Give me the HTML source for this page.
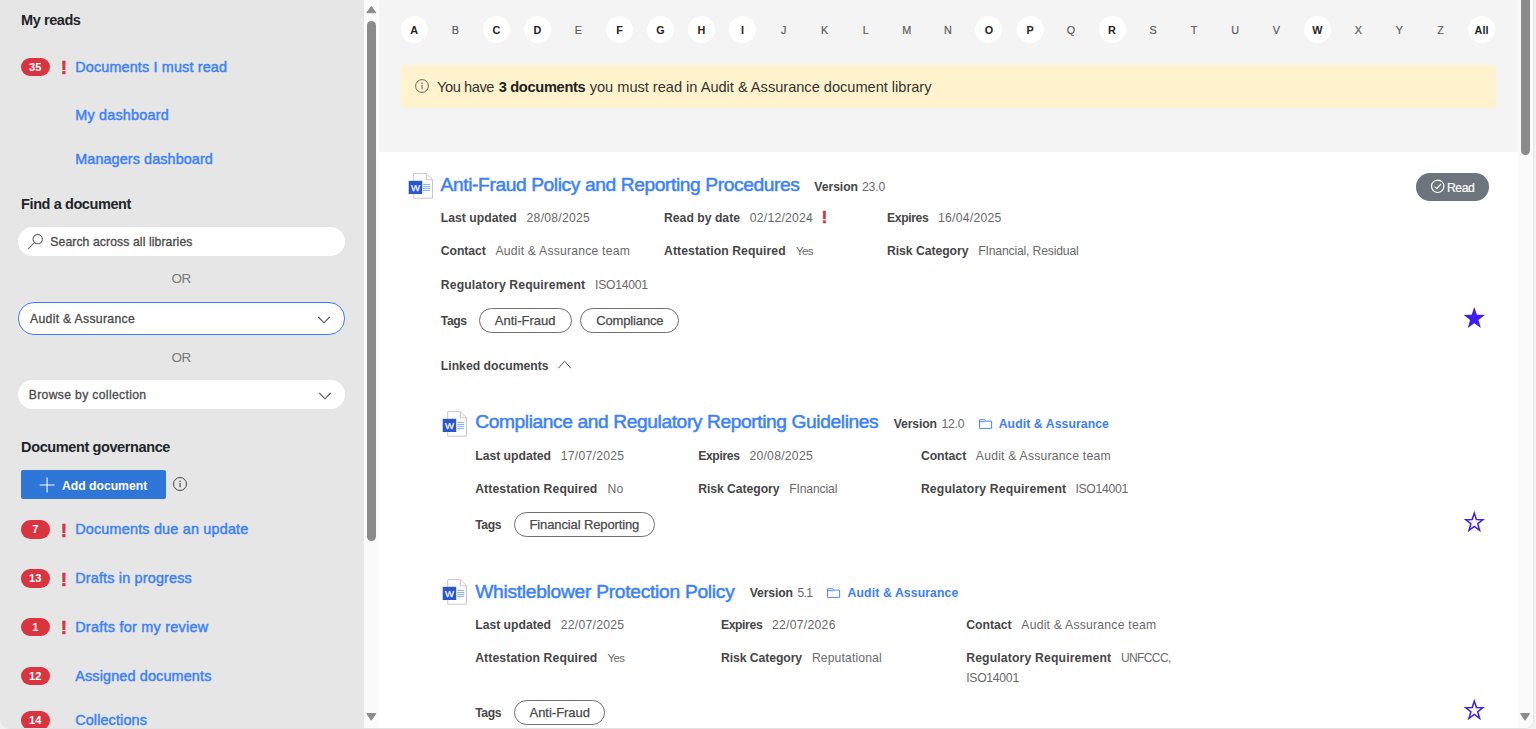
<!DOCTYPE html>
<html lang="en">
<head>
<meta charset="utf-8">
<title>Document library</title>
<style>
*{box-sizing:border-box;margin:0;padding:0}
html,body{width:1536px;height:729px;overflow:hidden;background:#f2f2f2;font-family:"Liberation Sans",sans-serif;color:#212529}
#app{position:absolute;left:0;top:0;width:1534px;height:729px;background:#fff;overflow:hidden;border-right:1px solid #e6e6e6;border-bottom:1px solid #e2e2e2;border-bottom-right-radius:9px;border-bottom-left-radius:9px}
.a,.t{position:absolute;white-space:nowrap}
.t{line-height:20px;height:20px}
svg{position:absolute;overflow:visible}
#side{left:0;top:0;width:364px;height:729px;background:#e6e6e6}
.sb{top:0;width:15px;height:729px;background:#fbfbfb}
.thumb{background:#8b8b8b;border-radius:5px;width:9px}
.badge{left:20.8px;width:29px;height:18.5px;border-radius:9.25px;background:#d9343f;color:#fff;font-size:11.2px;font-weight:bold;text-align:center;line-height:19.3px}
.ex{left:60px;width:8px;color:#d9343f;font-weight:bold;font-size:17.6px;line-height:20px;height:20px;text-align:center;-webkit-text-stroke:0.7px #d9343f}
.pill{left:17.5px;width:327.5px;border-radius:16px;background:#fff}
#top{left:379px;top:0;width:1139px;height:151.5px;background:#f4f4f4}
.al{top:15.6px;width:27px;height:27px;border-radius:50%;text-align:center;line-height:29.6px;font-size:10.8px;color:#5c5c5c;-webkit-text-stroke:0.2px #5c5c5c}
.al.on{background:#fff;color:#212529;font-weight:bold;-webkit-text-stroke:0}
#banner{left:401px;top:65.2px;width:1094.5px;height:43px;border-radius:4px;background:#fff3cd}
.tag{border:1.2px solid #707070;border-radius:13px}
</style>
</head>
<body>
<div id="app">
<div class="a" id="side"></div>
<div class="a sb" style="left:364px"></div>
<div class="a thumb" style="left:367px;top:20.5px;height:520.5px;width:8.8px"></div>
<div class="a" id="top"></div>
<div class="a sb" style="left:1517.6px;width:15.6px"></div>
<div class="a thumb" style="left:1520.9px;top:-10px;height:164.8px;width:8.8px"></div>
<svg style="left:0;top:0" width="1" height="1"><path d="M366.8 12.7 L371.3 6.4 L375.8 12.7 Z" fill="#8b8b8b" stroke="#8b8b8b" stroke-width="1" stroke-linejoin="round"/></svg>
<svg style="left:0;top:0" width="1" height="1"><path d="M366.8 713.6 L371.3 720.2 L375.8 713.6 Z" fill="#8b8b8b" stroke="#8b8b8b" stroke-width="1" stroke-linejoin="round"/></svg>
<svg style="left:0;top:0" width="1" height="1"><path d="M1520.6 713.6 L1525.1 720.2 L1529.6 713.6 Z" fill="#8b8b8b" stroke="#8b8b8b" stroke-width="1" stroke-linejoin="round"/></svg>
<div class="a badge" style="top:57.75px">35</div>
<div class="a ex" style="top:58.3px">!</div>
<div class="a badge" style="top:520.25px">7</div>
<div class="a ex" style="top:520.8px">!</div>
<div class="a badge" style="top:569.25px">13</div>
<div class="a ex" style="top:569.8px">!</div>
<div class="a badge" style="top:617.75px">1</div>
<div class="a ex" style="top:618.3px">!</div>
<div class="a badge" style="top:666.75px">12</div>
<div class="a badge" style="top:711.25px">14</div>
<div class="a pill" style="top:227px;height:29px"></div>
<svg style="left:27px;top:232px" width="18" height="18" fill="none" stroke="#666" stroke-width="1.1"><circle cx="10.7" cy="7.1" r="4.7"/><path d="M7.4 10.6 L1.4 16.6" stroke-linecap="round"/></svg>
<div class="a pill" style="top:302.3px;height:32.4px;border:1.9px solid #3b80f4"></div>
<div class="a pill" style="top:380.4px;height:28.8px"></div>
<svg style="left:317.1px;top:314.5px" width="14" height="10" fill="none" stroke="#555" stroke-width="1.1"><path d="M1.3 2 L7 7.8 L12.7 2"/></svg>
<svg style="left:318.3px;top:391px" width="14" height="10" fill="none" stroke="#555" stroke-width="1.1"><path d="M1.3 2 L7 7.8 L12.7 2"/></svg>
<div class="a" style="left:20.8px;top:470.1px;width:145.2px;height:29px;border-radius:2px;background:#2f76d9"></div>
<svg style="left:39px;top:477px" width="16" height="16" stroke="#fff" stroke-width="1.1"><path d="M8.1 0.6 V15.4 M0.7 8 H15.5"/></svg>
<svg style="left:171.6px;top:476.3px" width="16" height="16"><circle cx="8" cy="8" r="6.5" fill="none" stroke="#444" stroke-width="1"/><rect x="7.5" y="7" width="1.1" height="4.2" fill="#444"/><rect x="7.4" y="4.6" width="1.3" height="1.3" fill="#444"/></svg>
<div class="a al on" style="left:400.7px">A</div>
<div class="a al" style="left:441.8px">B</div>
<div class="a al on" style="left:482.8px">C</div>
<div class="a al on" style="left:523.9px">D</div>
<div class="a al" style="left:564.9px">E</div>
<div class="a al on" style="left:606.0px">F</div>
<div class="a al on" style="left:647.0px">G</div>
<div class="a al on" style="left:688.0px">H</div>
<div class="a al on" style="left:729.1px">I</div>
<div class="a al" style="left:770.1px">J</div>
<div class="a al" style="left:811.2px">K</div>
<div class="a al" style="left:852.2px">L</div>
<div class="a al" style="left:893.3px">M</div>
<div class="a al" style="left:934.3px">N</div>
<div class="a al on" style="left:975.4px">O</div>
<div class="a al on" style="left:1016.5px">P</div>
<div class="a al" style="left:1057.5px">Q</div>
<div class="a al on" style="left:1098.5px">R</div>
<div class="a al" style="left:1139.6px">S</div>
<div class="a al" style="left:1180.6px">T</div>
<div class="a al" style="left:1221.7px">U</div>
<div class="a al" style="left:1262.8px">V</div>
<div class="a al on" style="left:1303.8px">W</div>
<div class="a al" style="left:1344.8px">X</div>
<div class="a al" style="left:1385.9px">Y</div>
<div class="a al" style="left:1427.0px">Z</div>
<div class="a al on" style="left:1468.0px">All</div>
<div class="a" id="banner"></div>
<svg style="left:414px;top:78.3px" width="16" height="16"><circle cx="8" cy="8" r="6.4" fill="none" stroke="#666" stroke-width="1"/><rect x="7.5" y="7" width="1.1" height="4.2" fill="#666"/><rect x="7.4" y="4.6" width="1.3" height="1.3" fill="#666"/></svg>
<svg style="left:0px;top:0px" width="1" height="1"><path d="M413.7 173.6 H426.3 L432.5 179.8 V198.2 H413.7 Z" fill="#fff" stroke="#c9c9c9" stroke-width="1"/><path d="M426.3 173.6 V179.8 H432.5" fill="none" stroke="#c9c9c9" stroke-width="1"/><rect x="408.7" y="180.8" width="13.5" height="13.2" fill="#2a56c6"/><path d="M423.2 184.5 H430.2 M423.2 186.5 H430.2 M423.2 188.5 H430.2 M423.2 190.5 H430.2" stroke="#7aaaf0" stroke-width="0.9"/><text x="415.45" y="190.9" text-anchor="middle" font-family="Liberation Sans, sans-serif" font-size="9.6" fill="#fff" stroke="#fff" stroke-width="0.25">W</text></svg>
<svg style="left:33.5px;top:237.5px" width="1" height="1"><path d="M413.7 173.6 H426.3 L432.5 179.8 V198.2 H413.7 Z" fill="#fff" stroke="#c9c9c9" stroke-width="1"/><path d="M426.3 173.6 V179.8 H432.5" fill="none" stroke="#c9c9c9" stroke-width="1"/><rect x="408.7" y="180.8" width="13.5" height="13.2" fill="#2a56c6"/><path d="M423.2 184.5 H430.2 M423.2 186.5 H430.2 M423.2 188.5 H430.2 M423.2 190.5 H430.2" stroke="#7aaaf0" stroke-width="0.9"/><text x="415.45" y="190.9" text-anchor="middle" font-family="Liberation Sans, sans-serif" font-size="9.6" fill="#fff" stroke="#fff" stroke-width="0.25">W</text></svg>
<svg style="left:33.5px;top:406.0px" width="1" height="1"><path d="M413.7 173.6 H426.3 L432.5 179.8 V198.2 H413.7 Z" fill="#fff" stroke="#c9c9c9" stroke-width="1"/><path d="M426.3 173.6 V179.8 H432.5" fill="none" stroke="#c9c9c9" stroke-width="1"/><rect x="408.7" y="180.8" width="13.5" height="13.2" fill="#2a56c6"/><path d="M423.2 184.5 H430.2 M423.2 186.5 H430.2 M423.2 188.5 H430.2 M423.2 190.5 H430.2" stroke="#7aaaf0" stroke-width="0.9"/><text x="415.45" y="190.9" text-anchor="middle" font-family="Liberation Sans, sans-serif" font-size="9.6" fill="#fff" stroke="#fff" stroke-width="0.25">W</text></svg>
<div class="a" style="left:1416.3px;top:173.2px;width:72.5px;height:27.5px;border-radius:14px;background:#6c757d"></div>
<svg style="left:1430px;top:179px" width="16" height="16" fill="none" stroke="#fff" stroke-width="1.2"><circle cx="7.7" cy="7.3" r="6.2"/><path d="M4.6 7.6 L6.8 9.7 L10.9 5.2"/></svg>
<div class="a ex" style="left:820.5px;top:208px;font-size:16px">!</div>
<div class="a tag" style="left:479px;top:308.2px;width:92.6px;height:24.8px"></div>
<div class="a tag" style="left:580.2px;top:308.2px;width:98.5px;height:24.8px"></div>
<div class="a tag" style="left:513.8px;top:512.0px;width:141.0px;height:24.6px"></div>
<div class="a tag" style="left:513.8px;top:700.2px;width:91.4px;height:24.4px"></div>
<svg style="left:557px;top:358px" width="16" height="12" fill="none" stroke="#555" stroke-width="1"><path d="M1.4 10.2 L7.6 3.2 L13.8 10.2"/></svg>
<svg style="left:978.8px;top:418.8px" width="14" height="11" fill="none" stroke="#4a88f5" stroke-width="1"><path d="M0.6 9.4 V0.7 H5.6 L6.6 2.1 H12.6 V9.4 Z M0.6 2.7 H5.6 L6.6 2.1"/></svg>
<svg style="left:826.8px;top:587.6px" width="14" height="11" fill="none" stroke="#4a88f5" stroke-width="1"><path d="M0.6 9.4 V0.7 H5.6 L6.6 2.1 H12.6 V9.4 Z M0.6 2.7 H5.6 L6.6 2.1"/></svg>
<svg style="left:0;top:0" width="1" height="1"><polygon points="1474.30,307.00 1476.90,314.85 1484.81,315.01 1478.50,320.03 1480.80,327.99 1474.30,323.24 1467.80,327.99 1470.10,320.03 1463.79,315.01 1471.70,314.85" fill="#3d1cf5"/></svg>
<svg style="left:0;top:0" width="1" height="1"><polygon points="1474.30,513.15 1476.42,519.54 1482.86,519.68 1477.72,523.77 1479.59,530.25 1474.30,526.38 1469.01,530.25 1470.88,523.77 1465.74,519.68 1472.18,519.54" fill="none" stroke="#3d1cf5" stroke-width="1.5" stroke-linejoin="miter"/></svg>
<svg style="left:0;top:0" width="1" height="1"><polygon points="1474.30,701.15 1476.42,707.54 1482.86,707.68 1477.72,711.77 1479.59,718.25 1474.30,714.38 1469.01,718.25 1470.88,711.77 1465.74,707.68 1472.18,707.54" fill="none" stroke="#3d1cf5" stroke-width="1.5" stroke-linejoin="miter"/></svg>
<div class="t" style="left:21.1px;top:10.4px;font-size:14.5px;color:#212529;letter-spacing:-0.434px;font-weight:bold">My reads</div>
<div class="t" style="left:21.1px;top:194.0px;font-size:14.5px;color:#212529;letter-spacing:-0.407px;font-weight:bold">Find a document</div>
<div class="t" style="left:21.1px;top:436.9px;font-size:14.5px;color:#212529;letter-spacing:-0.391px;font-weight:bold">Document governance</div>
<div class="t" style="left:75.2px;top:56.5px;font-size:14.4px;color:#3b82f6;letter-spacing:0.154px;-webkit-text-stroke:0.45px #3b82f6">Documents I must read</div>
<div class="t" style="left:75.2px;top:105.2px;font-size:14.4px;color:#3b82f6;letter-spacing:0.216px;-webkit-text-stroke:0.45px #3b82f6">My dashboard</div>
<div class="t" style="left:75.2px;top:149.2px;font-size:14.4px;color:#3b82f6;letter-spacing:0.099px;-webkit-text-stroke:0.45px #3b82f6">Managers dashboard</div>
<div class="t" style="left:75.2px;top:518.7px;font-size:14.4px;color:#3b82f6;letter-spacing:0.195px;-webkit-text-stroke:0.45px #3b82f6">Documents due an update</div>
<div class="t" style="left:75.2px;top:568.0px;font-size:14.4px;color:#3b82f6;letter-spacing:0.179px;-webkit-text-stroke:0.45px #3b82f6">Drafts in progress</div>
<div class="t" style="left:75.2px;top:616.7px;font-size:14.4px;color:#3b82f6;letter-spacing:0.268px;-webkit-text-stroke:0.45px #3b82f6">Drafts for my review</div>
<div class="t" style="left:75.2px;top:665.7px;font-size:14.4px;color:#3b82f6;letter-spacing:0.150px;-webkit-text-stroke:0.45px #3b82f6">Assigned documents</div>
<div class="t" style="left:75.2px;top:710.0px;font-size:14.4px;color:#3b82f6;letter-spacing:0.128px;-webkit-text-stroke:0.45px #3b82f6">Collections</div>
<div class="t" style="left:50.3px;top:232.4px;font-size:12.2px;color:#4a4a4a;letter-spacing:0.098px;-webkit-text-stroke:0.3px #4a4a4a">Search across all libraries</div>
<div class="t" style="left:30.0px;top:309.0px;font-size:12.2px;color:#4a4a4a;letter-spacing:0.318px;-webkit-text-stroke:0.3px #4a4a4a">Audit &amp; Assurance</div>
<div class="t" style="left:28.7px;top:384.9px;font-size:12.2px;color:#4a4a4a;letter-spacing:0.335px;-webkit-text-stroke:0.3px #4a4a4a">Browse by collection</div>
<div class="t" style="left:171.5px;top:268.8px;font-size:13.47px;color:#777;letter-spacing:-0.600px">OR</div>
<div class="t" style="left:171.5px;top:347.5px;font-size:13.47px;color:#777;letter-spacing:-0.600px">OR</div>
<div class="t" style="left:62.0px;top:475.9px;font-size:12.2px;color:#fff;letter-spacing:-0.009px;font-weight:bold">Add document</div>
<div class="t" style="left:437.0px;top:77.0px;font-size:14.6px;color:#333;letter-spacing:-0.416px">You have</div>
<div class="t" style="left:498.7px;top:77.0px;font-size:14.6px;color:#222;letter-spacing:-0.301px;font-weight:bold">3 documents</div>
<div class="t" style="left:589.7px;top:77.0px;font-size:14.6px;color:#333;letter-spacing:-0.010px">you must read in Audit &amp; Assurance document library</div>
<div class="t" style="left:440.6px;top:175.3px;font-size:19.2px;color:#3b82f6;letter-spacing:-0.393px;-webkit-text-stroke:0.5px #3b82f6">Anti-Fraud Policy and Reporting Procedures</div>
<div class="t" style="left:814.3px;top:177.0px;font-size:12.2px;color:#464646;letter-spacing:-0.047px;font-weight:bold">Version</div>
<div class="t" style="left:862.0px;top:177.0px;font-size:12.2px;color:#6a6a6a;letter-spacing:-0.184px">23.0</div>
<div class="t" style="left:1447.0px;top:177.7px;font-size:12.2px;color:#fff;letter-spacing:-0.460px;-webkit-text-stroke:0.2px #fff">Read</div>
<div class="t" style="left:440.8px;top:208.0px;font-size:12.2px;color:#464646;letter-spacing:0.013px;font-weight:bold">Last updated</div>
<div class="t" style="left:526.6px;top:208.0px;font-size:12.2px;color:#6a6a6a;letter-spacing:0.240px">28/08/2025</div>
<div class="t" style="left:664.0px;top:208.0px;font-size:12.2px;color:#464646;letter-spacing:0.012px;font-weight:bold">Read by date</div>
<div class="t" style="left:749.8px;top:208.0px;font-size:12.2px;color:#6a6a6a;letter-spacing:0.220px">02/12/2024</div>
<div class="t" style="left:887.0px;top:208.0px;font-size:12.2px;color:#464646;letter-spacing:-0.378px;font-weight:bold">Expires</div>
<div class="t" style="left:938.0px;top:208.0px;font-size:12.2px;color:#6a6a6a;letter-spacing:0.260px">16/04/2025</div>
<div class="t" style="left:440.8px;top:241.0px;font-size:12.2px;color:#464646;letter-spacing:-0.054px;font-weight:bold">Contact</div>
<div class="t" style="left:495.5px;top:241.0px;font-size:12.2px;color:#6a6a6a;letter-spacing:0.201px">Audit &amp; Assurance team</div>
<div class="t" style="left:664.0px;top:241.0px;font-size:12.2px;color:#464646;letter-spacing:0.097px;font-weight:bold">Attestation Required</div>
<div class="t" style="left:796.0px;top:241.0px;font-size:11.53px;color:#6a6a6a;letter-spacing:-0.600px">Yes</div>
<div class="t" style="left:887.0px;top:241.0px;font-size:12.2px;color:#464646;letter-spacing:-0.044px;font-weight:bold">Risk Category</div>
<div class="t" style="left:978.2px;top:241.0px;font-size:12.2px;color:#6a6a6a;letter-spacing:-0.171px">FInancial, Residual</div>
<div class="t" style="left:440.8px;top:275.0px;font-size:12.2px;color:#464646;letter-spacing:0.134px;font-weight:bold">Regulatory Requirement</div>
<div class="t" style="left:595.0px;top:275.0px;font-size:12.2px;color:#6a6a6a;letter-spacing:-0.261px">ISO14001</div>
<div class="t" style="left:440.8px;top:311.2px;font-size:12.2px;color:#464646;letter-spacing:-0.437px;font-weight:bold">Tags</div>
<div class="t" style="left:440.8px;top:356.0px;font-size:12.2px;color:#464646;letter-spacing:0.008px;font-weight:bold">Linked documents</div>
<div class="t" style="left:475.2px;top:412.3px;font-size:19.2px;color:#3b82f6;letter-spacing:-0.396px;-webkit-text-stroke:0.5px #3b82f6">Compliance and Regulatory Reporting Guidelines</div>
<div class="t" style="left:893.7px;top:414.0px;font-size:12.2px;color:#464646;letter-spacing:-0.119px;font-weight:bold">Version</div>
<div class="t" style="left:941.6px;top:414.0px;font-size:12.2px;color:#6a6a6a;letter-spacing:-0.259px">12.0</div>
<div class="t" style="left:998.7px;top:414.0px;font-size:12.2px;color:#3b80f2;letter-spacing:0.100px;font-weight:bold">Audit &amp; Assurance</div>
<div class="t" style="left:475.2px;top:445.8px;font-size:12.2px;color:#464646;letter-spacing:-0.004px;font-weight:bold">Last updated</div>
<div class="t" style="left:560.7px;top:445.8px;font-size:12.2px;color:#6a6a6a;letter-spacing:0.270px">17/07/2025</div>
<div class="t" style="left:698.2px;top:445.8px;font-size:12.2px;color:#464646;letter-spacing:-0.378px;font-weight:bold">Expires</div>
<div class="t" style="left:749.4px;top:445.8px;font-size:12.2px;color:#6a6a6a;letter-spacing:0.260px">20/08/2025</div>
<div class="t" style="left:920.9px;top:445.8px;font-size:12.2px;color:#464646;letter-spacing:-0.011px;font-weight:bold">Contact</div>
<div class="t" style="left:975.8px;top:445.8px;font-size:12.2px;color:#6a6a6a;letter-spacing:0.224px">Audit &amp; Assurance team</div>
<div class="t" style="left:475.2px;top:478.8px;font-size:12.2px;color:#464646;letter-spacing:0.117px;font-weight:bold">Attestation Required</div>
<div class="t" style="left:607.6px;top:478.8px;font-size:12.2px;color:#6a6a6a;letter-spacing:0.203px">No</div>
<div class="t" style="left:698.2px;top:478.8px;font-size:12.2px;color:#464646;letter-spacing:-0.051px;font-weight:bold">Risk Category</div>
<div class="t" style="left:789.2px;top:478.8px;font-size:12.2px;color:#6a6a6a;letter-spacing:-0.150px">FInancial</div>
<div class="t" style="left:920.9px;top:478.8px;font-size:12.2px;color:#464646;letter-spacing:0.175px;font-weight:bold">Regulatory Requirement</div>
<div class="t" style="left:1075.4px;top:478.8px;font-size:12.2px;color:#6a6a6a;letter-spacing:-0.286px">ISO14001</div>
<div class="t" style="left:475.2px;top:514.5px;font-size:12.2px;color:#464646;letter-spacing:-0.437px;font-weight:bold">Tags</div>
<div class="t" style="left:475.2px;top:581.8px;font-size:19.2px;color:#3b82f6;letter-spacing:-0.270px;-webkit-text-stroke:0.5px #3b82f6">Whistleblower Protection Policy</div>
<div class="t" style="left:749.8px;top:583.0px;font-size:12.2px;color:#464646;letter-spacing:-0.162px;font-weight:bold">Version</div>
<div class="t" style="left:797.4px;top:583.0px;font-size:12.02px;color:#6a6a6a;letter-spacing:-0.600px">5.1</div>
<div class="t" style="left:847.6px;top:583.0px;font-size:12.2px;color:#3b80f2;letter-spacing:0.130px;font-weight:bold">Audit &amp; Assurance</div>
<div class="t" style="left:475.2px;top:614.7px;font-size:12.2px;color:#464646;letter-spacing:-0.004px;font-weight:bold">Last updated</div>
<div class="t" style="left:560.7px;top:614.7px;font-size:12.2px;color:#6a6a6a;letter-spacing:0.270px">22/07/2025</div>
<div class="t" style="left:720.9px;top:614.7px;font-size:12.2px;color:#464646;letter-spacing:-0.378px;font-weight:bold">Expires</div>
<div class="t" style="left:772.0px;top:614.7px;font-size:12.2px;color:#6a6a6a;letter-spacing:0.270px">22/07/2026</div>
<div class="t" style="left:966.2px;top:614.7px;font-size:12.2px;color:#464646;letter-spacing:0.018px;font-weight:bold">Contact</div>
<div class="t" style="left:1021.3px;top:614.7px;font-size:12.2px;color:#6a6a6a;letter-spacing:0.224px">Audit &amp; Assurance team</div>
<div class="t" style="left:475.2px;top:648.2px;font-size:12.2px;color:#464646;letter-spacing:0.117px;font-weight:bold">Attestation Required</div>
<div class="t" style="left:607.6px;top:648.2px;font-size:11.41px;color:#6a6a6a;letter-spacing:-0.600px">Yes</div>
<div class="t" style="left:720.9px;top:648.2px;font-size:12.2px;color:#464646;letter-spacing:-0.059px;font-weight:bold">Risk Category</div>
<div class="t" style="left:811.9px;top:648.2px;font-size:12.2px;color:#6a6a6a;letter-spacing:0.122px">Reputational</div>
<div class="t" style="left:966.2px;top:648.2px;font-size:12.2px;color:#464646;letter-spacing:0.162px;font-weight:bold">Regulatory Requirement</div>
<div class="t" style="left:1120.9px;top:648.2px;font-size:12.01px;color:#6a6a6a;letter-spacing:-0.600px">UNFCCC,</div>
<div class="t" style="left:966.2px;top:667.7px;font-size:12.2px;color:#6a6a6a;letter-spacing:-0.274px">ISO14001</div>
<div class="t" style="left:475.2px;top:703.0px;font-size:12.2px;color:#464646;letter-spacing:-0.437px;font-weight:bold">Tags</div>
<div class="t" style="left:494.7px;top:310.9px;font-size:13px;color:#4a4a4a;letter-spacing:0.020px;-webkit-text-stroke:0.25px #4a4a4a">Anti-Fraud</div>
<div class="t" style="left:596.3px;top:310.9px;font-size:13px;color:#4a4a4a;letter-spacing:-0.156px;-webkit-text-stroke:0.25px #4a4a4a">Compliance</div>
<div class="t" style="left:529.5px;top:514.6px;font-size:13px;color:#4a4a4a;letter-spacing:-0.122px;-webkit-text-stroke:0.25px #4a4a4a">Financial Reporting</div>
<div class="t" style="left:529.5px;top:702.7px;font-size:13px;color:#4a4a4a;letter-spacing:-0.020px;-webkit-text-stroke:0.25px #4a4a4a">Anti-Fraud</div>
</div>
</body>
</html>
